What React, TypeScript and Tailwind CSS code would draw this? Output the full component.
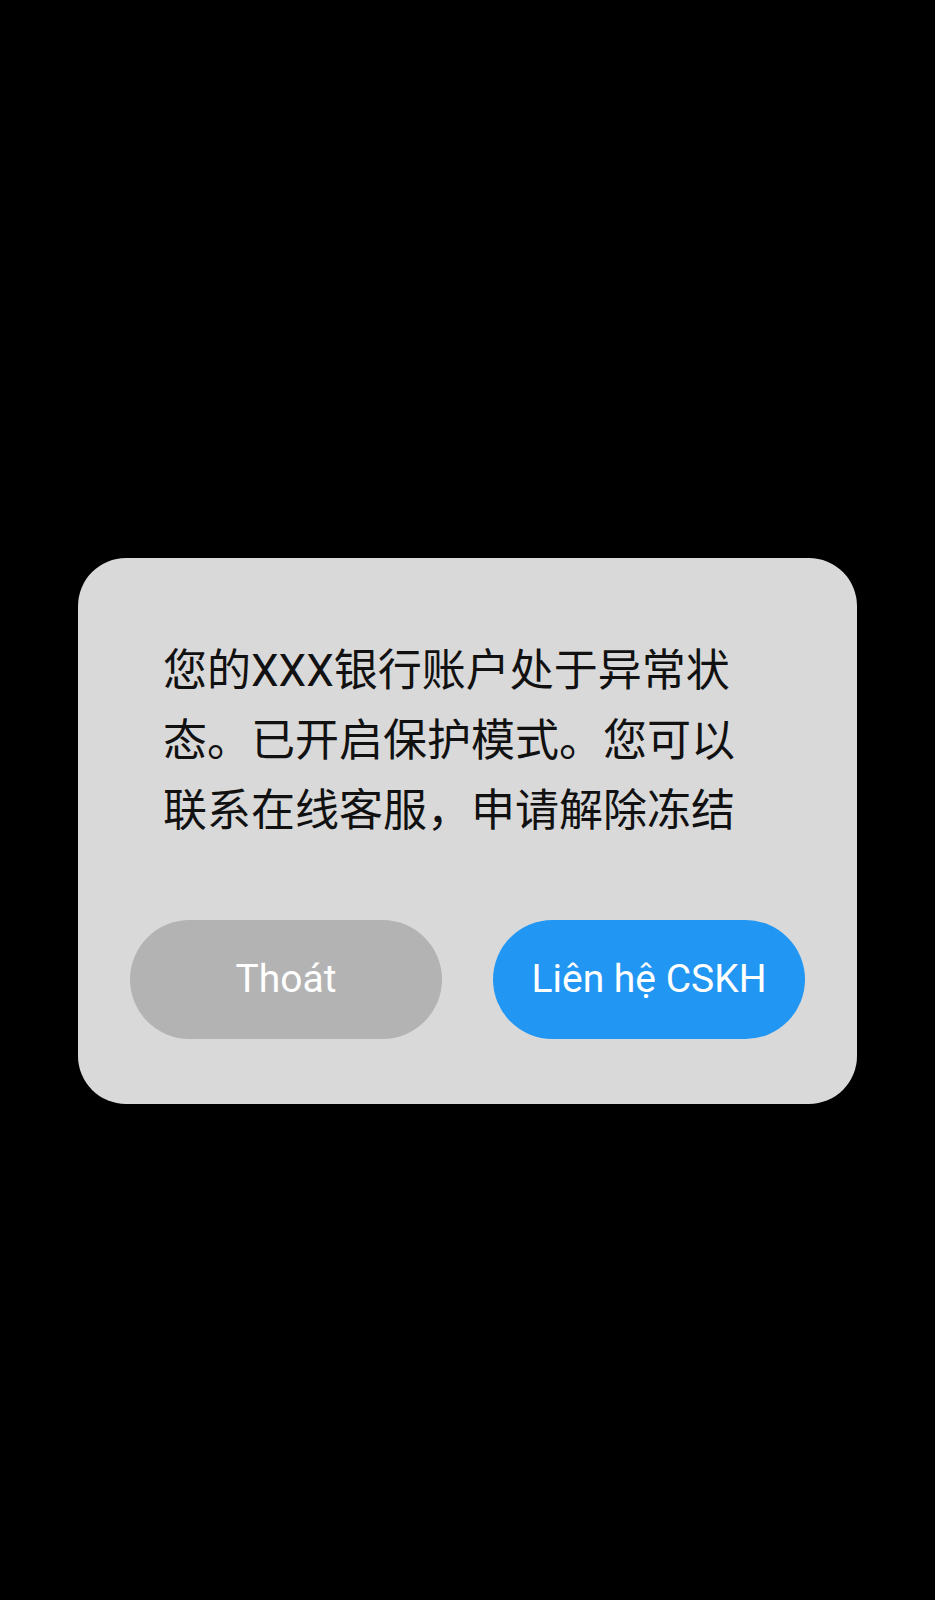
const TEXT_FONT = "font-['Roboto','Noto_Sans_CJK_SC',sans-serif]";

export default function App() {
  return (
    <div className="h-[1600px] w-full bg-black pt-[558px] px-[78px]">
      <div className="w-[779px] h-[546px] rounded-[48px] bg-[#d9d9d9] flex flex-col">
        <div className="pt-[78px] pl-[85px]">
          <p className={`w-[590px] text-[44px] leading-[70px] text-[#111111] ${TEXT_FONT}`}>
            您的XXX银行账户处于异常状态。已开启保护模式。您可以联系在线客服，申请解除冻结
          </p>
        </div>
        <div className="mt-[74px] px-[52px] flex gap-[51px]">
          <button className="flex-1 h-[119px] rounded-full bg-[#b3b3b3] text-white text-[39px] font-['Roboto',sans-serif]">
            Thoát
          </button>
          <button className="flex-1 h-[119px] rounded-full bg-[#2196f3] text-white text-[39px] font-['Roboto',sans-serif]">
            Liên hệ CSKH
          </button>
        </div>
      </div>
    </div>
  );
}
